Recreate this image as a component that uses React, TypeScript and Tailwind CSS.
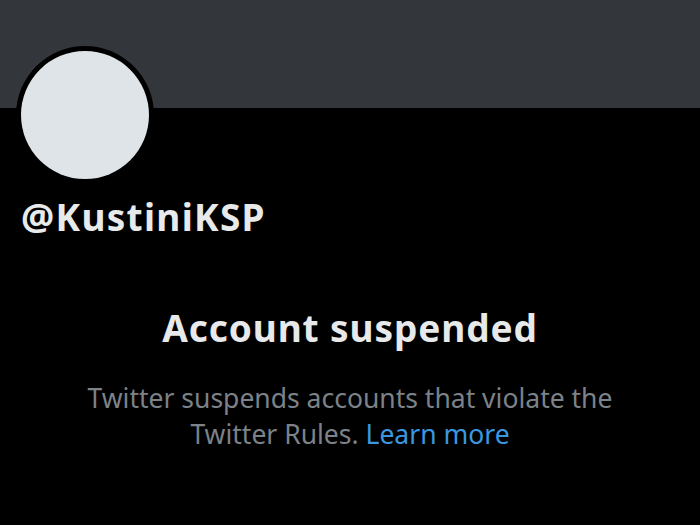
import React from 'react';

const font = { fontFamily: '"Noto Sans", "Open Sans", sans-serif' };

export default function App() {
  return (
    <div className="w-[700px] h-[525px] bg-black overflow-hidden text-[#e7e9ea]" style={font}>
      <div className="h-[108px] bg-[#33363a]" />
      <div className="ml-[16px] -mt-[62px] w-[138px] h-[138px] rounded-full bg-black p-[5px]">
        <div className="w-full h-full rounded-full bg-[#dfe4e8]" />
      </div>
      <div className="pl-[21px] mt-[10px] text-[37px] font-bold leading-[46px] tracking-[1.3px]">@KustiniKSP</div>
      <div className="mt-[65px] flex flex-col items-center text-center">
        <h1 className="text-[37px] font-bold leading-[46px] tracking-[0.9px]">Account suspended</h1>
        <p className="mt-[29px] w-[600px] text-[26.5px] leading-[36px] text-[#7c8287]">
          Twitter suspends accounts that violate the Twitter Rules.{' '}
          <span className="text-[#3b98e0]">Learn more</span>
        </p>
      </div>
    </div>
  );
}
